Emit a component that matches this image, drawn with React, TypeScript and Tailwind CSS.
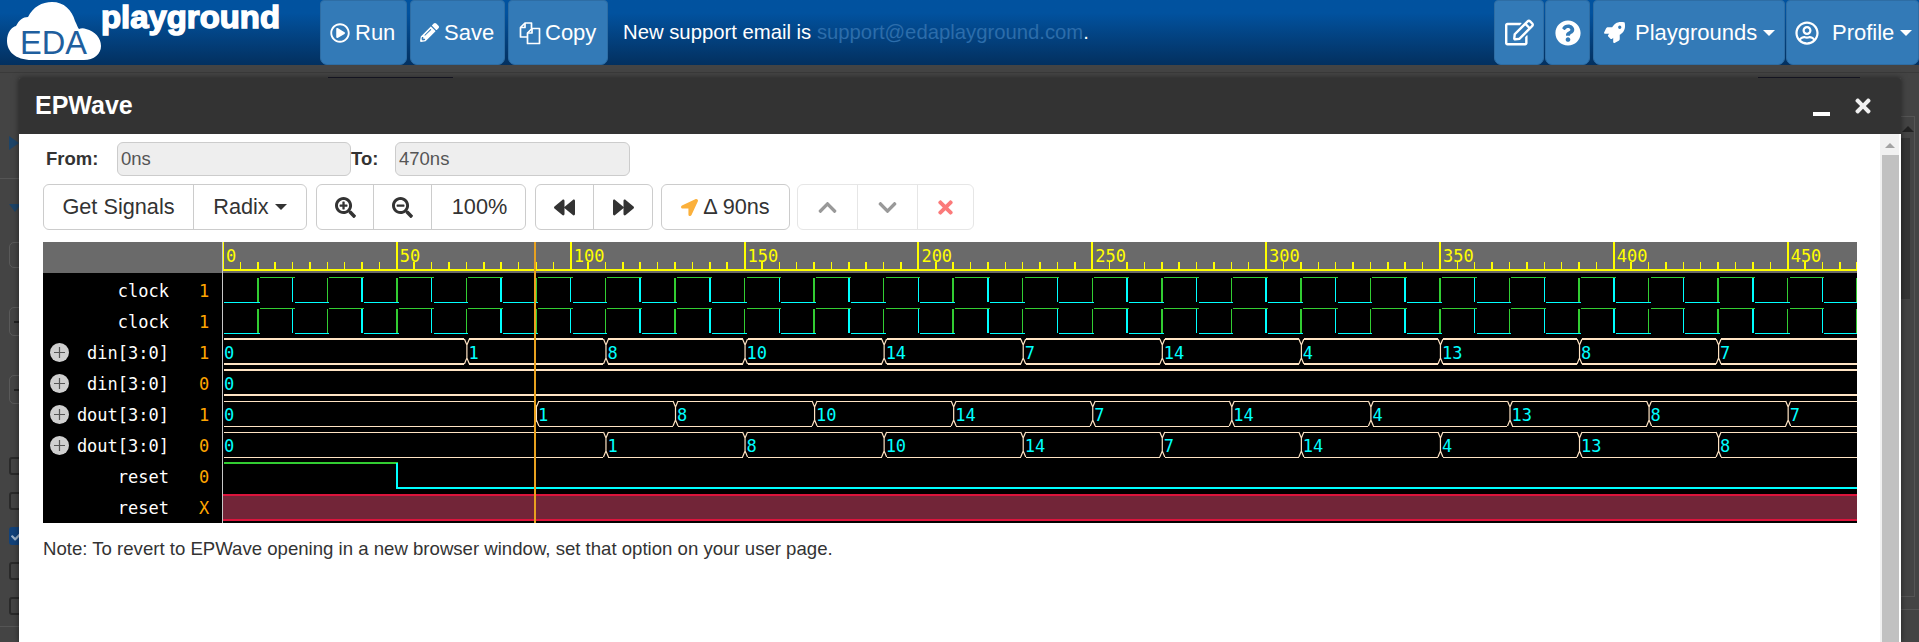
import React from "react";
import {
  FaRegPlayCircle, FaPencilAlt, FaRegEdit, FaQuestionCircle, FaRocket, FaRegUserCircle,
  FaSearchPlus, FaSearchMinus, FaBackward, FaForward, FaLocationArrow, FaChevronUp, FaChevronDown, FaTimes, FaCheck,
} from "react-icons/fa";

const PX = 3.477;
const X = (t: number) => t * PX;
const hi = (i: number) => 35 + 31 * i;
const lo = (i: number) => 60 + 31 * i;
const MONO = "'DejaVu Sans Mono', monospace";
const W = 1634;

function Clock({ row }: { row: number }) {
  const els: React.ReactNode[] = [];
  for (let t = 0; t < 480; t += 10) {
    const high = (t / 10) % 2 === 1;
    const a = t === 0 ? 1 : X(t) + 2;
    const b = X(t + 10) + 2;
    const y = high ? hi(row) : lo(row);
    els.push(<line key={"h" + t} x1={a} x2={b} y1={y} y2={y} stroke={high ? "#32cd32" : "#00ffff"} strokeWidth={1} shapeRendering="crispEdges" />);
    if (t > 0) {
      els.push(<line key={"v" + t} x1={X(t)} x2={X(t)} y1={hi(row) + 1} y2={lo(row)} stroke={high ? "#32cd32" : "#00ffff"} strokeWidth={1.5} shapeRendering="crispEdges" />);
    }
  }
  return <g>{els}</g>;
}

function Bus({ row, changes, sw }: { row: number; changes: [number, string][]; sw: number }) {
  const color = "#ffe4c4";
  const h = hi(row);
  const l = lo(row);
  const els: React.ReactNode[] = [];
  changes.forEach(([t, v], k) => {
    const a = t === 0 ? 1 : X(t) + 3;
    const next = changes[k + 1];
    const b = next ? X(next[0]) - 2 : W + 5;
    els.push(<line key={"t" + k} x1={a} x2={b} y1={h} y2={h} stroke={color} strokeWidth={sw} shapeRendering="crispEdges" />);
    els.push(<line key={"b" + k} x1={a} x2={b} y1={l} y2={l} stroke={color} strokeWidth={sw} shapeRendering="crispEdges" />);
    if (t > 0) {
      const x = X(t);
      els.push(
        <path key={"x" + k} d={`M${x - 2} ${h}L${x + 0.5} ${h + 6}V${l - 6}L${x - 2} ${l}M${x + 3} ${h}L${x + 0.5} ${h + 6}M${x + 0.5} ${l - 6}L${x + 3} ${l}`} fill="none" stroke={color} strokeWidth={1.2} />
      );
    }
    els.push(
      <text key={"v" + k} x={t === 0 ? 1 : X(t) + 2} y={h + 20} fill="#00ffff" fontSize={17} fontFamily={MONO}>{v}</text>
    );
  });
  return <g>{els}</g>;
}

function Chart() {
  const ticks: React.ReactNode[] = [];
  for (let t = 0; t <= 470; t += 5) {
    const major = t % 50 === 0;
    ticks.push(
      <line key={t} x1={X(t)} x2={X(t)} y1={major ? 0 : 19.5} y2={28} stroke="#ffff00" strokeWidth={major ? 2 : 1.5} shapeRendering="crispEdges" />
    );
    if (major) {
      ticks.push(<text key={"l" + t} x={X(t) + 3} y={20} fill="#ffff00" fontSize={17} fontFamily={MONO}>{t}</text>);
    }
  }
  return (
    <svg width={W} height={281} className="block shrink-0">
      <rect x={0} y={0} width={W} height={31} fill="#6a6a6a" />
      <rect x={0} y={31} width={W} height={250} fill="#000000" />
      <rect x={0} y={27} width={W} height={2} fill="#ffff00" />
      {ticks}
      <Clock row={0} />
      <Clock row={1} />
      <Bus row={2} sw={2} changes={[[0, "0"], [70, "1"], [110, "8"], [150, "10"], [190, "14"], [230, "7"], [270, "14"], [310, "4"], [350, "13"], [390, "8"], [430, "7"]]} />
      <Bus row={3} sw={2} changes={[[0, "0"]]} />
      <Bus row={4} sw={1} changes={[[0, "0"], [90, "1"], [130, "8"], [170, "10"], [210, "14"], [250, "7"], [290, "14"], [330, "4"], [370, "13"], [410, "8"], [450, "7"]]} />
      <Bus row={5} sw={1} changes={[[0, "0"], [110, "1"], [150, "8"], [190, "10"], [230, "14"], [270, "7"], [310, "14"], [350, "4"], [390, "13"], [430, "8"]]} />
      <path d={`M1 ${hi(6)}H${X(50)}V${lo(6)}`} fill="none" stroke="#32cd32" strokeWidth={2} shapeRendering="crispEdges" />
      <path d={`M${X(50)} ${hi(6)}V${lo(6)}H${W}`} fill="none" stroke="#00ffff" strokeWidth={2} shapeRendering="crispEdges" />
      <rect x={0} y={253} width={W} height={25} fill="#722538" />
      <rect x={0} y={252} width={W} height={2} fill="#dc143c" />
      <rect x={0} y={277} width={W} height={2} fill="#dc143c" />
      <rect x={311} y={0} width={2} height={281} fill="#e8a11f" />
    </svg>
  );
}

function Plus() {
  return (
    <svg width="19" height="19" viewBox="0 0 19 19" className="shrink-0">
      <circle cx="9.5" cy="9.5" r="9.5" fill="#cfcfcf" />
      <path d="M9.5 4v11M4 9.5h11" stroke="#555" strokeWidth="1.2" />
    </svg>
  );
}

function CopyIcon() {
  return (
    <svg width="22" height="24" viewBox="0 0 22 24" fill="none" stroke="currentColor" strokeWidth="1.7" strokeLinejoin="round" className="shrink-0">
      <path d="M9 16H1.5V6.5L6 2h6.5v5.5" />
      <path d="M6 2v4.5H1.5" />
      <path d="M8.5 22.5V12l4.5-4.5h7.5v15z" />
      <path d="M13 7.5V12H8.5" />
    </svg>
  );
}

const ROWS: { name: string; val: string; plus?: boolean }[] = [
  { name: "clock", val: "1" },
  { name: "clock", val: "1" },
  { name: "din[3:0]", val: "1", plus: true },
  { name: "din[3:0]", val: "0", plus: true },
  { name: "dout[3:0]", val: "1", plus: true },
  { name: "dout[3:0]", val: "0", plus: true },
  { name: "reset", val: "0" },
  { name: "reset", val: "X" },
];

function Caret({ className }: { className: string }) {
  return <span className={`inline-block w-0 h-0 border-x-[6px] border-x-transparent border-t-[6px] ${className}`} />;
}

function NavBtn({ className, children }: { className: string; children: React.ReactNode }) {
  return (
    <div className={`h-[65px] shrink-0 flex items-center rounded-t-[4px] rounded-b-[7px] bg-[#337ab7] border border-[#2e6da4] text-white text-[22px] ${className}`}>
      {children}
    </div>
  );
}

function Logo() {
  return (
    <svg width="320" height="65" viewBox="0 0 320 65" className="block shrink-0">
      <path d="M32 60C15 60 7 51 7 41C7 32 12 27 16 26C19 20 23 17 28 17C33 7 42 2 52 2C64 2 72 10 75 21C77 25 78 28 79 29C81 28 84 28 86 29C95 31 101 38 101 46C101 54 94 60 84 60Z" fill="#ffffff" />
      <text x="20" y="54" fontSize="33" fill="#1f5f9e" fontFamily="'Liberation Sans', sans-serif" textLength="67" lengthAdjust="spacingAndGlyphs">EDA</text>
      <text x="101" y="28" fontSize="31" fontWeight="700" fill="#ffffff" stroke="#ffffff" strokeWidth="1.4" fontFamily="'Liberation Sans', sans-serif" textLength="179" lengthAdjust="spacingAndGlyphs">playground</text>
    </svg>
  );
}

export default function App() {
  return (
    <div className="relative w-[1919px] h-[642px] overflow-hidden flex flex-col bg-[#444444] font-['Liberation_Sans',Arial,sans-serif] text-[#333333]">
      {/* navbar */}
      <div className="h-[65px] shrink-0 flex bg-gradient-to-b from-[#01529f] from-20% to-[#03305f]">
        <Logo />
        <div className="flex gap-[3px]">
          <NavBtn className="w-[87px] pl-[9px] gap-[5px]"><FaRegPlayCircle size={20} />Run</NavBtn>
          <NavBtn className="w-[95px] pl-[9px] gap-[5px]"><FaPencilAlt size={19} />Save</NavBtn>
          <NavBtn className="w-[100px] pl-[10px] gap-[4px]"><CopyIcon />Copy</NavBtn>
        </div>
        <div className="ml-[15px] flex items-center text-[20.3px] text-white">
          <span>New support email is&nbsp;</span>
          <span className="text-[#2c6dab]">support@edaplayground.com</span>
          <span>.</span>
        </div>
        <div className="ml-auto flex">
          <NavBtn className="w-[50px] justify-center"><FaRegEdit size={29} /></NavBtn>
          <NavBtn className="w-[45px] ml-[1px] justify-center"><FaQuestionCircle size={26} /></NavBtn>
          <NavBtn className="w-[192px] ml-[3px] pl-[10px] gap-[10px]"><FaRocket size={21} /><span>Playgrounds</span><Caret className="-ml-[4px] border-t-white" /></NavBtn>
          <NavBtn className="w-[133px] ml-[1px] pl-[8px] gap-[13px]"><FaRegUserCircle size={24} /><span>Profile</span><Caret className="-ml-[7px] border-t-white" /></NavBtn>
        </div>
      </div>

      {/* dimmed page underneath */}
      <div className="flex-1 flex flex-col min-h-0">
        <div className="h-[13px] shrink-0 pt-[7px]">
          <div className="h-px bg-[#3a3a3a]" />
          <div className="flex mt-[4px]">
            <div className="ml-[328px] w-[125px] h-px bg-[#1a1a2a]" />
            <div className="ml-auto mr-[59px] w-[102px] h-px bg-[#1a1a2a]" />
          </div>
        </div>
        <div className="flex-1 flex justify-between min-h-0">
          <div className="w-[19px] overflow-hidden flex flex-col pl-[9px]">
            <div className="mt-[58px] w-0 h-0 shrink-0 border-y-[7px] border-y-transparent border-l-[10px] border-l-[#1d4468]" />
            <div className="mt-[28px] h-px shrink-0 bg-[#555555] -ml-[9px]" />
            <div className="mt-[25px] w-0 h-0 shrink-0 border-x-[6px] border-x-transparent border-t-[8px] border-t-[#1d4468]" />
            <div className="mt-[30px] w-[24px] h-[26px] shrink-0 rounded-[5px] border border-[#5a5a5a]" />
            <div className="mt-[39px] w-[24px] h-[29px] shrink-0 rounded-[5px] border border-[#5a5a5a] flex items-center pl-[4px]">
              <div className="w-[6px] h-[2px] bg-[#222222]" />
            </div>
            <div className="mt-[39px] w-[24px] h-[29px] shrink-0 rounded-[5px] border border-[#5a5a5a] flex items-center pl-[4px]">
              <div className="w-[6px] h-[2px] bg-[#222222]" />
            </div>
            <div className="mt-[53px] w-[18px] h-[18px] shrink-0 rounded-[3px] border-2 border-[#2a2a2a]" />
            <div className="mt-[17px] w-[18px] h-[18px] shrink-0 rounded-[3px] border-2 border-[#2a2a2a]" />
            <div className="mt-[17px] w-[18px] h-[18px] shrink-0 rounded-[3px] bg-[#12427a] flex items-center pl-[2px] text-[#9fb3c8]"><FaCheck size={11} /></div>
            <div className="mt-[17px] w-[18px] h-[18px] shrink-0 rounded-[3px] border-2 border-[#2a2a2a]" />
            <div className="mt-[17px] w-[18px] h-[18px] shrink-0 rounded-[3px] border-2 border-[#2a2a2a]" />
            <div className="mt-[11px] h-px bg-[#555555] -ml-[9px] shrink-0" />
          </div>
          <div className="w-[18px] flex flex-col">
            <div className="mt-[38px] h-[481px] w-[14px] shrink-0 border-r border-b border-t border-[#555555]">
              <div className="mt-[9px] ml-[1px] w-0 h-0 border-x-[6px] border-x-transparent border-b-[6px] border-b-[#222222]" />
              <div className="mt-[6px] h-[161px] w-[9px] bg-[#353535]" />
            </div>
            <div className="mt-[12px] h-px bg-[#555555] shrink-0" />
          </div>
        </div>
      </div>

      {/* EPWave dialog */}
      <div className="absolute left-[19px] top-[78px] w-[1882px] bottom-0 flex flex-col shadow-[0_0_6px_rgba(0,0,0,0.5)]">
        <div className="h-[56px] shrink-0 bg-[#333333] rounded-t-[3px] flex items-center pl-[16px] relative">
          <span className="text-[25px] font-bold text-white">EPWave</span>
          <div className="absolute left-[1794px] top-[34px] w-[17px] h-[4px] bg-white" />
          <FaTimes className="absolute left-[1833px] top-[17px] text-[#f0f0f0]" size={22} />
        </div>
        <div className="flex-1 min-h-0 flex bg-white">
          <div className="flex-1 pl-[24px] pt-[8px]">
            <div className="flex items-center h-[34px] text-[18.5px]">
              <span className="font-bold ml-[3px] w-[71px]">From:</span>
              <div className="w-[234px] h-[34px] rounded-[6px] border border-[#cccccc] bg-[#eeeeee] text-[#555555] pl-[3px] flex items-center">0ns</div>
              <span className="font-bold w-[44px]">To:</span>
              <div className="w-[235px] h-[34px] rounded-[6px] border border-[#cccccc] bg-[#eeeeee] text-[#555555] pl-[3px] flex items-center">470ns</div>
            </div>
            <div className="mt-[8px] flex h-[46px] text-[21.7px]">
              <div className="flex rounded-[6px] border border-[#cccccc] divide-x divide-[#cccccc]">
                <div className="w-[150px] flex items-center justify-center">Get Signals</div>
                <div className="w-[112px] flex items-center justify-center">Radix<Caret className="ml-[6px] border-t-[#333333]" /></div>
              </div>
              <div className="ml-[9px] flex rounded-[6px] border border-[#cccccc] divide-x divide-[#cccccc]">
                <div className="w-[57px] flex items-center justify-center"><FaSearchPlus size={21} /></div>
                <div className="w-[58px] flex items-center justify-center"><FaSearchMinus size={21} /></div>
                <div className="w-[93px] pl-[2px] flex items-center justify-center">100%</div>
              </div>
              <div className="ml-[9px] flex rounded-[6px] border border-[#cccccc] divide-x divide-[#cccccc]">
                <div className="w-[58px] flex items-center justify-center"><FaBackward size={21} /></div>
                <div className="w-[58px] flex items-center justify-center"><FaForward size={21} /></div>
              </div>
              <div className="ml-[8px] w-[129px] flex items-center justify-center gap-[5px] rounded-[6px] border border-[#cccccc]">
                <FaLocationArrow size={17} className="text-[#fbb03b]" />Δ 90ns
              </div>
              <div className="ml-[7px] flex rounded-[6px] border border-[#e6e6e6] divide-x divide-[#e6e6e6]">
                <div className="w-[60px] flex items-center justify-center text-[#999999]"><FaChevronUp size={21} /></div>
                <div className="w-[60px] flex items-center justify-center text-[#999999]"><FaChevronDown size={21} /></div>
                <div className="w-[55px] flex items-center justify-center text-[#fb7a7a]"><FaTimes size={21} /></div>
              </div>
            </div>
            {/* wave viewer */}
            <div className="mt-[12px] w-[1814px] h-[281px] flex overflow-hidden">
              <div className="w-[180px] shrink-0 bg-black border-r border-[#c8c8c8] flex flex-col text-[17px]" style={{ fontFamily: MONO }}>
                <div className="h-[31px] bg-[#6a6a6a]" />
                {ROWS.map((r, i) => (
                  <div key={i} className="h-[31px] shrink-0 flex items-center pl-[7px] pr-[13px] pt-[7px]">
                    <div className="w-[19px] -mt-[3px]">{r.plus ? <Plus /> : null}</div>
                    <div className="flex-1 text-right text-white whitespace-nowrap">{r.name}</div>
                    <div className="ml-[30px] w-[10px] text-[#ffa500]">{r.val}</div>
                  </div>
                ))}
              </div>
              <Chart />
            </div>
            <p className="mt-[15px] text-[18.6px] leading-[22px]">Note: To revert to EPWave opening in a new browser window, set that option on your user page.</p>
          </div>
          {/* scrollbar */}
          <div className="w-[21px] shrink-0 flex flex-col bg-white">
            <div className="h-[21px] w-[19px] bg-[#f1f1f1] flex justify-center pt-[9px]">
              <div className="w-0 h-0 border-x-[5px] border-x-transparent border-b-[5px] border-b-[#a3a3a3]" />
            </div>
            <div className="flex-1 w-[19px] bg-[#f1f1f1] pl-[2px]">
              <div className="h-full w-[17px] bg-[#c1c1c1]" />
            </div>
          </div>
        </div>
      </div>
    </div>
  );
}
